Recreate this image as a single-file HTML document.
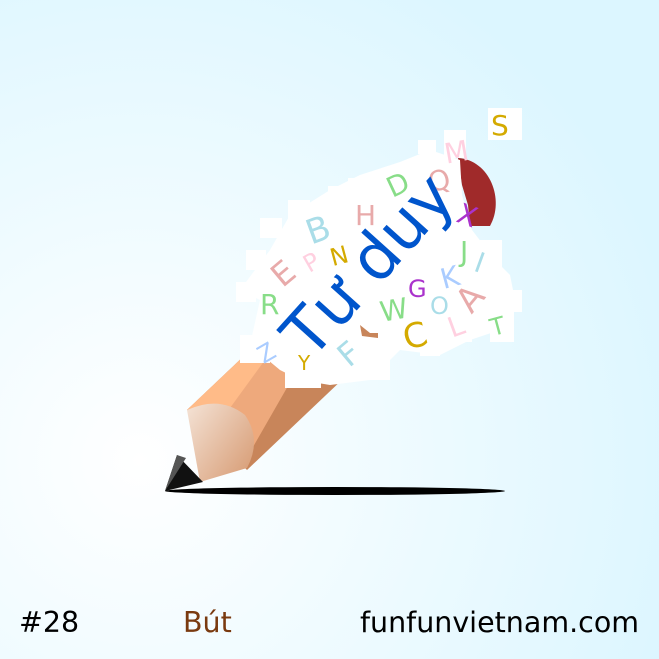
<!DOCTYPE html>
<html><head><meta charset="utf-8"><style>
html,body{margin:0;padding:0;width:659px;height:659px;overflow:hidden}
</style></head><body>
<svg width="659" height="659" viewBox="0 0 659 659" xmlns="http://www.w3.org/2000/svg" font-family="DejaVu Sans, Liberation Sans, sans-serif">
<defs>
<radialGradient id="bg" cx="140" cy="460" r="560" gradientUnits="userSpaceOnUse">
<stop offset="0" stop-color="#ffffff"/><stop offset="1" stop-color="#dcf6ff"/>
</radialGradient>
<linearGradient id="wood" x1="180" y1="420" x2="250" y2="470" gradientUnits="userSpaceOnUse">
<stop offset="0" stop-color="#f3e0d2"/><stop offset="1" stop-color="#d9a07a"/>
</linearGradient>
</defs>
<rect width="659" height="659" fill="url(#bg)"/>
<ellipse cx="335" cy="491" rx="170" ry="4" fill="#000"/>
<polygon points="187,410 245,355 345,377 247,470" fill="#c8855a"/>
<polygon points="187,410 245,355 300,365 253,447" fill="#eea97c"/>
<polygon points="187,410 245,355 270,353 230,408" fill="#ffbb88"/>
<path d="M187,410 Q220,395 245,415 Q262,440 247,468 L200,482 Z" fill="url(#wood)"/>
<polygon points="165,491 177,455 203,482" fill="#111"/>
<polygon points="165,491 177,455 186,458" fill="#555"/>
<path d="M458,158 C490,160 505,200 490,226 L470,226 L468,205 L462,185 Z" fill="#a02a2a"/>
<g fill="#fff">
<polygon points="250,345 260,300 240,290 270,250 290,215 330,190 360,175 400,162 430,150 460,160 462,195 472,230 495,260 510,275 515,300 500,330 470,340 440,355 400,350 370,380 330,385 300,380 280,370"/>
<rect x="260" y="218" width="22" height="20"/><rect x="288" y="200" width="22" height="22"/>
<rect x="328" y="186" width="30" height="26"/><rect x="348" y="178" width="20" height="16"/>
<rect x="418" y="140" width="18" height="14"/><rect x="444" y="130" width="22" height="28"/>
<rect x="488" y="108" width="34" height="32"/>
<rect x="236" y="282" width="20" height="20"/><rect x="246" y="250" width="20" height="20"/>
<rect x="240" y="335" width="30" height="28"/><rect x="285" y="360" width="36" height="28"/>
<rect x="366" y="350" width="24" height="30"/><rect x="420" y="330" width="20" height="26"/>
<rect x="450" y="320" width="22" height="22"/><rect x="490" y="310" width="24" height="32"/>
<rect x="500" y="290" width="22" height="22"/><rect x="480" y="240" width="22" height="30"/>
</g>
<path d="M360,325 L370,333 L378,333 L378,338 L362,336 Z" fill="#c8855a"/>
<g font-size="28">
<text x="491" y="135" fill="#d4aa00">S</text>
<text x="444" y="162" fill="#ffd0e0" transform="rotate(-10 455 150)">M</text>
<text x="428" y="190" fill="#e8aaaa" transform="rotate(-15 440 180)">Q</text>
<text x="386" y="194" fill="#88dd88" transform="rotate(-25 398 182)">D</text>
<text x="355" y="225" fill="#e8aaaa">H</text>
<text x="306" y="240" fill="#aadde8" font-size="34" transform="rotate(-20 322 228)">B</text>
<text x="458" y="226" fill="#aa33cc" transform="rotate(20 470 215)">X</text>
<text x="460" y="261" fill="#88dd88">J</text>
<text x="476" y="274" fill="#aadde8" transform="rotate(20 485 262)">I</text>
<text x="330" y="264" fill="#d4aa00" font-size="24" transform="rotate(-15 340 255)">N</text>
<text x="303" y="270" fill="#ffd0e0" font-size="24" transform="rotate(-30 312 260)">P</text>
<text x="270" y="282" fill="#e8aaaa" font-size="32" transform="rotate(-40 285 268)">E</text>
<text x="440" y="287" fill="#aaccff" transform="rotate(-15 450 275)">K</text>
<text x="408" y="297" fill="#aa33cc" font-size="24">G</text>
<text x="452" y="307" fill="#e8aaaa" font-size="34" transform="rotate(-50 470 290)">A</text>
<text x="260" y="314" fill="#88dd88">R</text>
<text x="430" y="314" fill="#aadde8" font-size="24">O</text>
<text x="380" y="320" fill="#88dd88" transform="rotate(-10 392 310)">W</text>
<text x="490" y="334" fill="#88dd88" font-size="24" transform="rotate(-15 500 325)">T</text>
<text x="448" y="335" fill="#ffd0e0" transform="rotate(-20 458 325)">L</text>
<text x="403" y="346" fill="#d4aa00" font-size="34" transform="rotate(-15 420 334)">C</text>
<text x="257" y="360" fill="#aaccff" font-size="24" transform="rotate(-30 268 350)">Z</text>
<text x="298" y="370" fill="#d4aa00" font-size="20">Y</text>
<text x="338" y="362" fill="#aadde8" font-size="32" transform="rotate(-40 352 350)">F</text>
</g>
<text x="368" y="265" fill="#0055cc" font-size="64" text-anchor="middle" transform="rotate(-48 368 265)" dy="22">Tư duy</text>
<g font-size="28.5">
<text x="19" y="632" fill="#000">#28</text>
<text x="183" y="632" fill="#7a3a10">Bút</text>
<text x="360" y="632" fill="#000">funfunvietnam.com</text>
</g>
</svg>
</body></html>
